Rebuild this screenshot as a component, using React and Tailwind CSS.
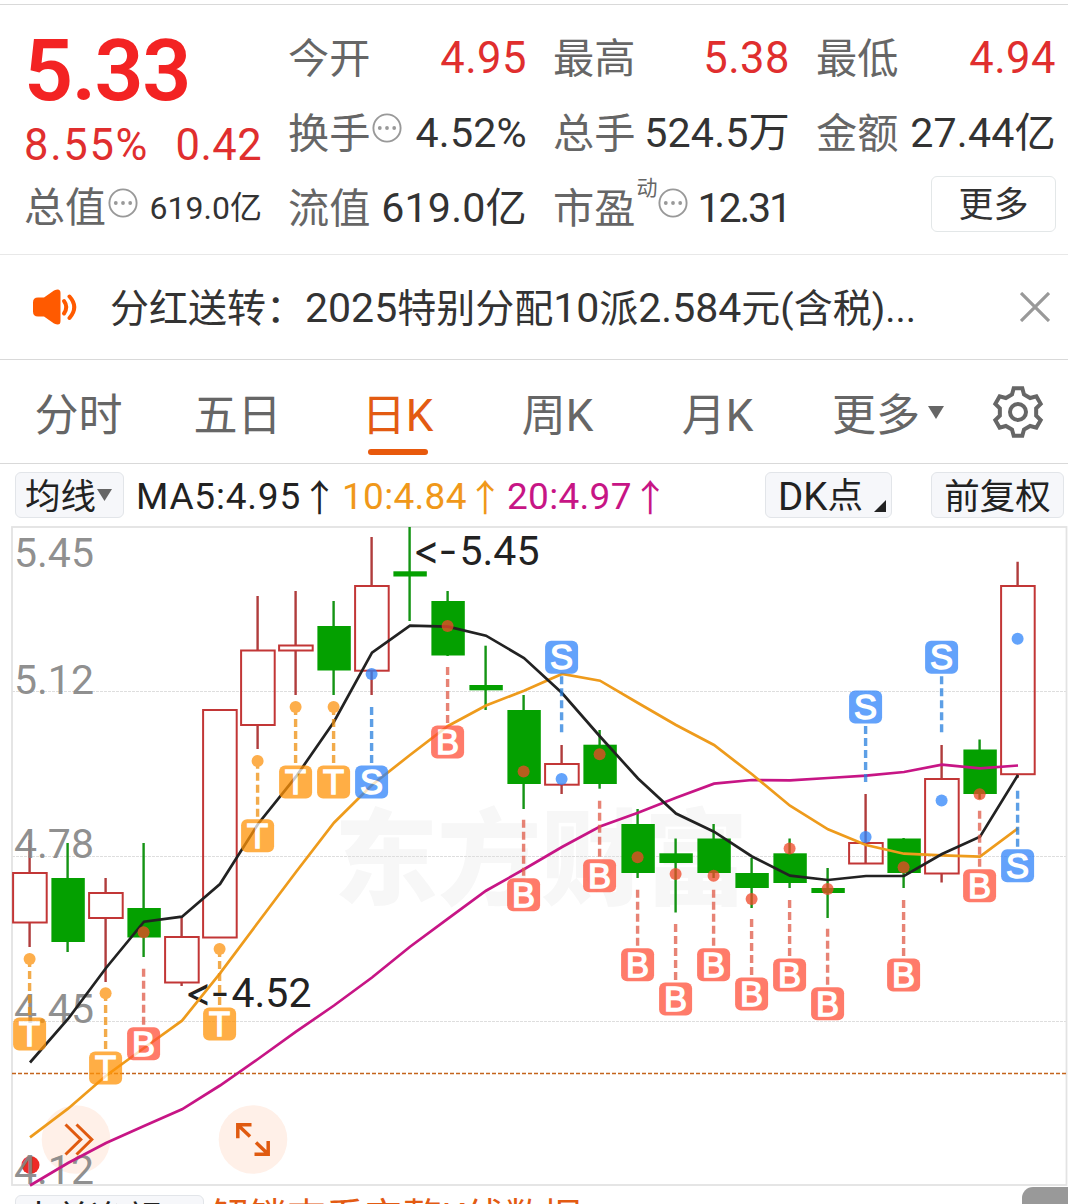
import { clsx } from "clsx";

const STEP = 38;
const FIRST_X = 29.6;
const xAt = (index) => FIRST_X + index * STEP;

// [direction, bodyTop, bodyBottom, high, low]
const candles = [
  ["up", 873, 922.5, 840, 947],
  ["down", 878, 942, 843, 952],
  ["up", 893, 918, 878, 982],
  ["down", 908, 937.5, 843, 957],
  ["up", 937, 982.5, 917, 986],
  ["up", 710, 937.5, 710, 937.5],
  ["up", 650.5, 725, 596, 749],
  ["up", 645.5, 650.5, 591, 695],
  ["down", 626, 670.5, 601, 695],
  ["up", 586, 670.7, 537, 695],
  ["down", 571.3, 576.5, 527, 621],
  ["down", 601, 655.5, 591, 656],
  ["down", 685, 690.3, 645.7, 710],
  ["down", 710, 784, 695, 809],
  ["up", 764, 784.7, 745, 794],
  ["down", 744.7, 784, 730, 788.7],
  ["down", 824, 873, 809, 878],
  ["down", 853.3, 863, 838.5, 912.5],
  ["down", 838.5, 873, 824, 878],
  ["down", 873, 888, 858, 908],
  ["down", 853.3, 883, 838.5, 888],
  ["down", 888, 893, 868, 918],
  ["up", 843, 863.5, 794, 843],
  ["down", 838.5, 873, 838, 888],
  ["up", 779, 873.5, 745, 882.5],
  ["down", 749.5, 794, 739.5, 799],
  ["up", 586, 774.2, 561.7, 778],
];

const averages = [
  {
    color: "#c71585",
    values: [
      1185.5, 1163, 1143, 1126, 1109.3, 1085.5, 1059, 1031.7, 1005.5, 977.5, 946.7, 918.7, 890.7, 869.3, 847, 826.5,
      812.7, 797.7, 783.7, 780, 780.3, 778, 775.7, 772, 764.7, 768.3, 765.5,
    ],
  },
  {
    color: "#ee9b1c",
    values: [
      1137.3, 1108.7, 1075.7, 1048, 1020.7, 973.3, 922.5, 872, 822.7, 785, 755, 726, 705.5, 690.7, 674, 680.7, 703,
      725, 745, 774.3, 805.7, 829.3, 845, 853.7, 855.3, 856.7, 828.3,
    ],
  },
  {
    color: "#222222",
    values: [
      1062.5, 1019, 968, 921.7, 916.7, 884, 824, 776.7, 721.7, 652.7, 625.7, 626.7, 635.7, 658, 693, 736.5, 778.5,
      813.5, 831.7, 856.5, 875.7, 880, 876, 876, 854, 836.7, 775,
    ],
  },
];

// "above" puts the badge over the candle, its dashes run downwards
const markers = [
  { at: 0, kind: "T", dot: 959, badge: 1034 },
  { at: 2, kind: "T", dot: 993.3, badge: 1068 },
  { at: 3, kind: "B", dot: 932.3, badge: 1043.7 },
  { at: 5, kind: "T", dot: 949, badge: 1024 },
  { at: 6, kind: "T", dot: 761, badge: 835.8 },
  { at: 7, kind: "T", dot: 707, badge: 782 },
  { at: 8, kind: "T", dot: 707, badge: 782 },
  { at: 9, kind: "S", dot: 674, badge: 782 },
  { at: 11, kind: "B", dot: 626, badge: 742 },
  { at: 13, kind: "B", dot: 771.5, badge: 894.7 },
  { at: 14, kind: "S", dot: 779, badge: 657.3, above: true },
  { at: 15, kind: "B", dot: 754.3, badge: 875.7 },
  { at: 16, kind: "B", dot: 857.3, badge: 964.8 },
  { at: 17, kind: "B", dot: 874, badge: 999 },
  { at: 18, kind: "B", dot: 875.7, badge: 964.8 },
  { at: 19, kind: "B", dot: 899, badge: 994 },
  { at: 20, kind: "B", dot: 848.5, badge: 975 },
  { at: 21, kind: "B", dot: 889, badge: 1003.8 },
  { at: 22, kind: "S", dot: 837, badge: 707, above: true },
  { at: 23, kind: "B", dot: 867.3, badge: 975 },
  { at: 24, kind: "S", dot: 800.5, badge: 657.3, above: true },
  { at: 25, kind: "B", dot: 794.3, badge: 885.8 },
  { at: 26, kind: "S", dot: 638.7, badge: 865.8 },
];

const markerColors = {
  T: { fill: "#ff9307", dot: "#fd9310", dash: "#ee9010" },
  B: { fill: "#ff5039", dot: "#f04828", dash: "#e05a48" },
  S: { fill: "#2f84fa", dot: "#2f84fa", dash: "#2780de" },
};

const axisLabels = [
  ["5.45", 567],
  ["5.12", 694],
  ["4.78", 857.7],
  ["4.45", 1022.5],
  ["4.12", 1183.5],
];

const tabs = ["分时", "五日", "日K", "周K", "月K"];

function InfoDots({ className }) {
  return (
    <svg viewBox="0 0 30 30" className={clsx("size-[30px] shrink-0", className)} fill="#999">
      <circle cx="15" cy="15" r="13.6" fill="none" stroke="#999" strokeWidth="1.9" />
      <circle cx="7.8" cy="15" r="1.9" />
      <circle cx="15" cy="15" r="1.9" />
      <circle cx="22.2" cy="15" r="1.9" />
    </svg>
  );
}

function Gear() {
  const tooth = [[-6, -17.5], [-4.3, -23.7], [4.3, -23.7], [6, -17.5]];
  const points = [0, 60, 120, 180, 240, 300].flatMap((deg) => {
    const a = (deg * Math.PI) / 180;
    return tooth.map(([x, y]) => `${x * Math.cos(a) - y * Math.sin(a)},${x * Math.sin(a) + y * Math.cos(a)}`);
  });
  return (
    <svg viewBox="-27 -27 54 54" className="size-[54px]" fill="none" stroke="#666" strokeWidth="4">
      <polygon points={points.join(" ")} />
      <circle r="8" />
    </svg>
  );
}

function Speaker() {
  return (
    <svg viewBox="0 0 46 38" className="h-[38px] w-[46px]" fill="#ff5a00">
      <path d="M6 9.500H12L22 2.500Q28.500 -0.500 28.500 5V33Q28.500 38.500 22 35.500L12 28.500H6Q1 28.500 1 23.500V14.500Q1 9.500 6 9.500Z" />
      <g fill="none" stroke="#ff5a00" strokeWidth="4" strokeLinecap="round">
        <path d="M32 13Q36.500 19 32 25.500" />
        <path d="M37.500 8.500Q47 19 37.500 30" />
      </g>
    </svg>
  );
}

function Stat({ label, value, sup, info, red, tight }) {
  return (
    <div className="flex h-[75px] items-center justify-between whitespace-nowrap text-[41.2px] leading-[60px]">
      <div className="mt-[3px] flex items-center text-[#666]">
        {label}
        {sup && <sup className="top-[-21px] ml-px text-[21px] leading-none">{sup}</sup>}
        {info && <InfoDots className={clsx("mt-[-12px]", sup ? "ml-px" : "ml-0.5")} />}
      </div>
      <div
        className={clsx(
          red ? "mt-[2px] text-[43.5px] tracking-[0.5px] text-[#e02e2e]" : "text-[#333]",
          tight ? "tracking-[-2.2px]" : !red && "tracking-[0.2px]"
        )}
      >
        {value}
      </div>
    </div>
  );
}

function Quote() {
  return (
    <section className="mt-1 flex h-[251px] gap-[26px] border-y border-t-[#d9d9d9] border-b-[#e8e8e8] pl-6 pt-[15px]">
      <div className="w-[238px] whitespace-nowrap">
        <div className="h-[92px] pt-[8px] text-[86px] font-semibold leading-[86px] tracking-[-1.500px] text-[#f32323]">5.33</div>
        <div className="flex h-[58px] items-center justify-between pt-[9px] text-[43.500px] leading-[54px] text-[#e02e2e]">
          <span className="tracking-[1.700px]">8.55%</span>
          <span className="tracking-[0.400px]">0.42</span>
        </div>
        <div className="flex h-[75px] items-center justify-between text-[41px] text-[#666]">
          <div className="mt-[3px] flex items-center">
            总值
            <InfoDots className="ml-0.5 mt-[-12px]" />
          </div>
          <span className="text-[32px] text-[#333]">619.0亿</span>
        </div>
      </div>
      <div className="w-[239px]">
        <Stat label="今开" value="4.95" red />
        <Stat label="换手" value="4.52%" info />
        <Stat label="流值" value="619.0亿" />
      </div>
      <div className="w-[237px]">
        <Stat label="最高" value="5.38" red />
        <Stat label="总手" value="524.5万" />
        <Stat label="市盈" sup="动" value="12.31" info tight />
      </div>
      <div className="w-[240px]">
        <Stat label="最低" value="4.94" red />
        <Stat label="金额" value="27.44亿" />
        <button className="ml-auto mt-[6px] block h-[56px] w-[125px] rounded-md border border-[#e3e7e8] pt-[3px] text-[35px] leading-[52px] text-[#333]">
          更多
        </button>
      </div>
    </section>
  );
}

function Notice() {
  return (
    <section className="flex h-[105px] items-center border-b border-[#d9d9d9] pl-8 pr-[18px]">
      <Speaker />
      <p className="ml-8 mt-0.5 whitespace-nowrap text-[39px] leading-none text-[#333]">
        分红送转：<span className="text-[41px]">2025</span>特别分配<span className="text-[41px]">10</span>派
        <span className="text-[41px]">2.584</span>元(含税)...
      </p>
      <svg viewBox="0 0 30 30" className="ml-auto size-[30px]" stroke="#999" strokeWidth="3.200">
        <path d="M1 1L29 29M29 1L1 29" />
      </svg>
    </section>
  );
}

function PeriodTabs() {
  return (
    <nav className="flex h-[104px] items-center border-b border-[#d9d9d9] text-[44px] leading-none text-[#666]">
      {tabs.map((tab) => (
        <div
          key={tab}
          className={clsx(
            "relative flex h-full w-[160px] items-center justify-center pr-px pt-[8px] first:w-[158px]",
            tab === "日K" && "text-[#e35b12]"
          )}
        >
          {tab}
          {tab === "日K" && <span className="absolute bottom-2 left-[50px] h-[6px] w-[60px] rounded-full bg-[#e8590c]" />}
        </div>
      ))}
      <div className="ml-[34px] flex items-center pt-[8px]">
        更多
        <svg viewBox="0 0 16 13" className="mb-[7px] ml-2 h-[13px] w-4" fill="#666">
          <path d="M0 0H16L8 13Z" />
        </svg>
      </div>
      <div className="ml-auto mr-[23px]">
        <Gear />
      </div>
    </nav>
  );
}

function Arrow() {
  return <span className="relative top-[3px]">↑</span>;
}

function Legend() {
  return (
    <div className="flex h-[60px] items-start whitespace-nowrap pl-[15px] pr-1 pt-2 text-[35.5px] text-[#222]">
      <div className="flex h-[46px] w-[109px] items-center rounded-md border border-[#e2e5e9] bg-[#f6f7fa] pl-[9px] pt-[5px] leading-none">
        均线
        <svg viewBox="0 0 15 12" className="mb-[5px] ml-px h-3 w-[15px]" fill="#666">
          <path d="M0 0H15L7.5 12Z" />
        </svg>
      </div>
      <div className="ml-3 flex h-[46px] items-center pt-0.5 text-[37px] leading-none tracking-[0.300px]">
        <span className="w-[206px] tracking-[0.800px]">MA5:4.95<Arrow /></span>
        <span className="w-[165px] text-[#f0981a]">10:4.84<Arrow /></span>
        <span className="text-[#c71585]">20:4.97<Arrow /></span>
      </div>
      <div className="relative ml-auto flex h-[46px] w-[127px] items-center rounded-md border border-[#e2e5e9] bg-[#f6f7fa] pl-3 pt-[4px] leading-none">
        <span className="text-[38.5px] leading-none">DK</span>点
        <svg viewBox="0 0 12 12" className="absolute bottom-[5px] right-[5px] size-3" fill="#222">
          <path d="M12 0V12H0Z" />
        </svg>
      </div>
      <div className="ml-[39px] flex h-[46px] w-[133px] items-center justify-center rounded-md border border-[#e2e5e9] bg-[#f6f7fa] pt-[5px] leading-none">
        前复权
      </div>
    </div>
  );
}

function Candle({ x, data: [direction, top, bottom, high, low] }) {
  if (direction === "down") {
    return (
      <g fill="#04a000">
        <rect x={x - 1.2} y={high} width="2.4" height={low - high} fill="#149414" />
        <rect x={x - 16.2} y={top} width="33.4" height={bottom - top} />
      </g>
    );
  }
  return (
    <g fill="none" stroke="#c23636" strokeWidth="2">
      <path d={`M${x} ${high}V${top}M${x} ${bottom}V${low}`} stroke="#b03c3c" strokeWidth="2.4" />
      <rect x={x - 16.5} y={top} width="33.6" height={bottom - top} />
    </g>
  );
}

function Marker({ at, kind, dot, badge, above }) {
  const x = xAt(at);
  const colors = markerColors[kind];
  const dashStart = above ? badge + 19 : badge - 75;
  return (
    <g opacity="0.75">
      <path d={`M${x} ${dashStart}v56`} stroke={colors.dash} strokeWidth="3.4" strokeDasharray="8 4" />
      <circle cx={x} cy={dot} r="6" fill={colors.dot} />
      <rect x={x - 16.5} y={badge - 16.5} width="33" height="33" rx="6" fill={colors.fill} />
      <text
        x={x}
        y={badge + 12}
        fill="#fff"
        stroke="#fff"
        strokeWidth="1.4"
        fontFamily="Liberation Sans, sans-serif"
        fontSize="34.5"
        textAnchor="middle"
      >
        {kind}
      </text>
    </g>
  );
}

function PriceTag({ x, y, value }) {
  return (
    <g fill="#222" fontSize="41">
      <text x={x - 3} y={y} fontFamily="Inter, sans-serif">&lt;</text>
      <text x={x + 22.5} y={y} fontFamily="Inter, sans-serif">-</text>
      <text x={x + 43.5} y={y}>{value}</text>
    </g>
  );
}

function KLineChart() {
  return (
    <svg viewBox="0 524 1068 664" className="block h-[664px] w-[1068px]">
      <text
        x="334"
        y="897"
        fill="#f7f7f7"
        fontFamily="Noto Sans CJK SC, sans-serif"
        fontSize="104"
        fontWeight="900"
        textLength="414"
      >
        东方财富
      </text>
      <g stroke="#dedede" strokeDasharray="3 1">
        <path d="M12 691.500H1066M12 856.500H1066M12 1021.500H1066" />
      </g>
      <rect x="12" y="527" width="1054.500" height="658" fill="none" stroke="#e3e3e3" strokeWidth="1.800" />
      <path d="M12 1073.500H1066" stroke="#c4641c" strokeWidth="1.400" strokeDasharray="4 2" />

      <circle cx="76" cy="1139.500" r="34.300" fill="#fff0e8" />
      <circle cx="253" cy="1139.500" r="34.300" fill="#fff0e8" />
      <g fill="none" stroke="#e05a10" strokeWidth="3">
        <path d="M65.500 1124.500L80.800 1139.500L65.500 1154.500M76.500 1124.500L91.800 1139.500L76.500 1154.500" />
        <path
          strokeWidth="3.500"
          d="M251.500 1124.800H237.800V1138.200M238.500 1125.500L250 1136.500M254.500 1154.200H268.200V1141M267.500 1153.500L256 1142.500"
        />
      </g>

      {candles.map((candle, index) => (
        <Candle key={index} x={xAt(index)} data={candle} />
      ))}

      <circle cx="30.500" cy="1165" r="9" fill="#ee2a26" />
      <g fill="#858585" fillOpacity="0.92" fontSize="41">
        {axisLabels.map(([label, y]) => (
          <text key={label} x="14" y={y}>{label}</text>
        ))}
      </g>
      <PriceTag x={416} y={565} value="5.45" />
      <PriceTag x={188} y={1007} value="4.52" />

      {averages.map(({ color, values }) => (
        <polyline
          key={color}
          points={values.map((y, index) => `${xAt(index) + 0.4},${y}`).join(" ")}
          fill="none"
          stroke={color}
          strokeWidth="2.700"
        />
      ))}
      {markers.map((marker) => (
        <Marker key={marker.at} {...marker} />
      ))}
    </svg>
  );
}

function IndicatorBar() {
  return (
    <div className="relative flex h-4 items-start whitespace-nowrap pl-[15px] pt-[7px]">
      <div className="h-[46px] w-[189px] shrink-0 rounded-md border border-[#e2e5e9] bg-[#f6f7fa] pl-[5px] text-[35px] leading-[47px] text-[#222]">
        大单净额
      </div>
      <div className="ml-[6px] text-[38.600px] leading-[46px] text-[#e35b12]">解锁查看完整K线数据</div>
      <div className="absolute right-0 top-[-1px] h-10 w-[46px] rounded-tl-[11px] bg-[#999]" />
    </div>
  );
}

export default function App() {
  return (
    <main className="h-[1204px] w-[1068px] overflow-hidden bg-white font-['Roboto','Noto_Sans_CJK_SC',sans-serif]">
      <Quote />
      <Notice />
      <PeriodTabs />
      <Legend />
      <KLineChart />
      <IndicatorBar />
    </main>
  );
}
